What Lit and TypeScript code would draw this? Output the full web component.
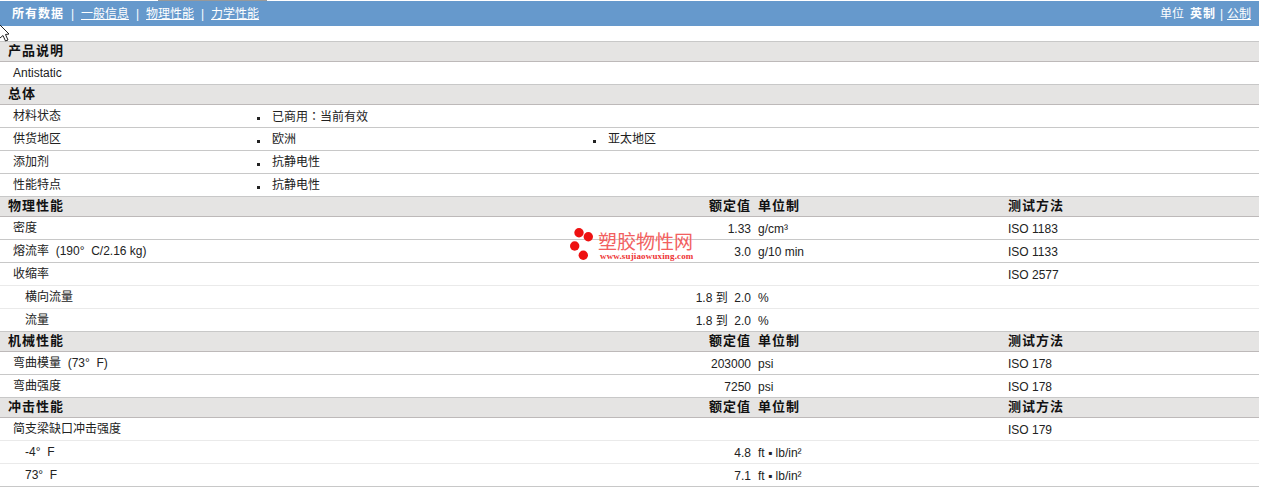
import { LitElement, html, css } from "lit";
import { customElement } from "lit/decorators.js";

type Row = { l: string; v?: string; u?: string; t?: string; ind?: boolean; light?: boolean };
type Bullet = { l: string; b: string[] };

@customElement("app-root")
export class AppRoot extends LitElement {
  static styles = css`
    :host { display: block; width: 1264px; height: 490px; background: #fff; position: relative; overflow: hidden;
      font-family: "Liberation Sans", "Noto Sans CJK SC", sans-serif; font-size: 12px; line-height: 16px; color: #222; }
    * { box-sizing: border-box; }
    .page { width: 1259px; padding-top: 1px; }
    .tab0 { position: absolute; top: 0; left: 158px; width: 109px; height: 1px; background: #999; }
    .bar { height: 25px; background: #6699cc; color: #fff; display: flex; justify-content: space-between; align-items: center; padding: 0 8px 0 12px; }
    .bar a { color: #fff; text-decoration: underline; }
    .bar b { font-weight: 700; letter-spacing: 1px; }
    .sep { display: inline-block; width: 17px; text-align: center; }
    .right .sep { width: 11px; }
    .unit { margin-right: 6px; }
    .gap { height: 16px; border-bottom: 1px solid #c8c8c8; }
    .head { height: 20px; padding-bottom: 1px; background: #e5e4e3; border-bottom: 1px solid #bdb9b9; display: grid; grid-template-columns: 751px 7px 250px 1fr; align-items: center; font-weight: 700; color: #111; font-size: 13px; letter-spacing: 1px; }
    .head .n { padding-left: 8px; }
    .row { height: 23px; border-bottom: 1px solid #c8c8c8; display: grid; grid-template-columns: 751px 7px 250px 1fr; align-items: center; }
    .row.light { border-bottom-color: #eaeaea; }
    .row .n { padding-left: 13px; }
    .row.ind .n { padding-left: 25px; }
    .row .lat { padding-top: 2px; }
    .hc { display: flex; justify-content: space-between; align-items: center; white-space: pre; }
    .brow { height: 23px; border-bottom: 1px solid #c8c8c8; display: grid; grid-template-columns: 257px 336px 1fr; align-items: center; }
    .brow .n { padding-left: 13px; }
    .bi { display: flex; align-items: center; }
    .dot { width: 3px; height: 3px; background: #222; margin-right: 12px; margin-top: 4px; }
    .tc { font-family: "Noto Sans CJK TC", sans-serif; }
    .logo { position: absolute; left: 568px; top: 226px; width: 130px; height: 40px; }
    .logo .cn { position: absolute; left: 30px; top: 5px; font-size: 19px; line-height: 24px; color: #f26060; white-space: nowrap; }
    .logo .url { position: absolute; left: 32px; top: 25px; font: bold 9px/10px "Liberation Serif", serif; letter-spacing: 0.15px; color: #ee3333; white-space: nowrap; }
    .logo svg { position: absolute; left: 0; top: 0; }
    .cursor { position: absolute; left: 0; top: 25px; }
  `;

  sec(n: string) {
    return html`<div class="head"><div class="n">${n}</div></div>`;
  }

  secC(n: string) {
    return html`<div class="head"><div class="n hc"><span>${n}</span><span>额定值</span></div><div></div><div>单位制</div><div>测试方法</div></div>`;
  }

  row(r: Row) {
    return html`<div class="row ${r.ind ? "ind" : ""} ${r.light ? "light" : ""}"><div class="n hc"><span>${r.l}</span><span class="lat">${r.v ?? ""}</span></div><div></div><div class="lat">${r.u ?? ""}</div><div class="lat">${r.t ?? ""}</div></div>`;
  }

  brow(r: Bullet) {
    return html`<div class="brow"><div class="n">${r.l}</div>${r.b.map(
      (x) => html`<div class="bi"><span class="dot"></span><span>${x}</span></div>`
    )}</div>`;
  }

  render() {
    return html`
      <div class="tab0"></div>
      <div class="page">
        <div class="bar">
          <div><b>所有数据</b><span class="sep">|</span><a>一般信息</a><span class="sep">|</span><a>物理性能</a><span class="sep">|</span><a>力学性能</a></div>
          <div class="right"><span class="unit">单位</span><b>英制</b><span class="sep">|</span><a>公制</a></div>
        </div>
        <div class="gap"></div>
        ${this.sec("产品说明")}
        ${this.brow({ l: "Antistatic", b: [] })}
        ${this.sec("总体")}
        <div class="brow"><div class="n">材料状态</div><div class="bi"><span class="dot"></span><span>已商用<span class="tc">：</span>当前有效</span></div></div>
        ${this.brow({ l: "供货地区", b: ["欧洲", "亚太地区"] })}
        ${this.brow({ l: "添加剂", b: ["抗静电性"] })}
        ${this.brow({ l: "性能特点", b: ["抗静电性"] })}
        ${this.secC("物理性能")}
        ${this.row({ l: "密度", v: "1.33", u: "g/cm³", t: "ISO 1183" })}
        ${this.row({ l: "熔流率  (190°  C/2.16 kg)", v: "3.0", u: "g/10 min", t: "ISO 1133" })}
        ${this.row({ l: "收缩率", t: "ISO 2577", light: true })}
        ${this.row({ l: "横向流量", v: "1.8 到  2.0", u: "%", ind: true, light: true })}
        ${this.row({ l: "流量", v: "1.8 到  2.0", u: "%", ind: true })}
        ${this.secC("机械性能")}
        ${this.row({ l: "弯曲模量  (73°  F)", v: "203000", u: "psi", t: "ISO 178" })}
        ${this.row({ l: "弯曲强度", v: "7250", u: "psi", t: "ISO 178" })}
        ${this.secC("冲击性能")}
        ${this.row({ l: "简支梁缺口冲击强度", t: "ISO 179", light: true })}
        ${this.row({ l: "-4°  F", v: "4.8", u: "ft ▪ lb/in²", ind: true, light: true })}
        ${this.row({ l: "73°  F", v: "7.1", u: "ft ▪ lb/in²", ind: true })}
      </div>
      <div class="logo">
        <svg width="30" height="40" viewBox="0 0 30 40">
          <circle cx="11" cy="6.7" r="4.7" fill="#ee1111"></circle>
          <circle cx="20.3" cy="10.7" r="4.7" fill="#ee1111"></circle>
          <circle cx="6.7" cy="20" r="4.7" fill="#ee1111"></circle>
          <circle cx="15.3" cy="29.3" r="4.7" fill="#ee1111"></circle>
        </svg>
        <div class="cn">塑胶物性网</div>
        <div class="url">www.sujiaowuxing.com</div>
      </div>
      <svg class="cursor" width="12" height="20" viewBox="0 0 12 20">
        <path d="M0 0 L9 9 L5.5 9.5 L8 15 L5.5 16 L3 10.5 L0 13" fill="#fff" stroke="#222" stroke-width="1"></path>
      </svg>
    `;
  }
}
